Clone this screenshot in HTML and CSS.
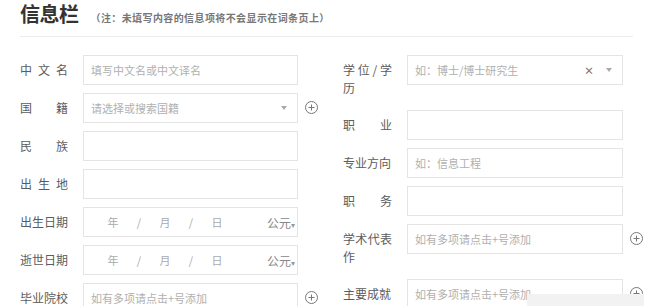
FILE: index.html
```html
<!DOCTYPE html>
<html lang="zh-CN">
<head>
    <meta charset="UTF-8">
    <meta name="viewport" content="width=device-width, initial-scale=1.0">
    <title>信息栏</title>
    <link rel="stylesheet" href="styles.css">
</head>
<body>
    <div class="info-panel">
        <div class="panel-head">
            <h2 class="panel-title">信息栏</h2>
            <span class="panel-note">（注：未填写内容的信息项将不会显示在词条页上）</span>
        </div>

        <div class="form-grid">
            <!-- 左侧一栏 -->
            <div class="form-col left-col">
                <div class="form-row">
                    <label class="row-label spread">中文名</label>
                    <input class="field" type="text" placeholder="填写中文名或中文译名">
                </div>
                <div class="form-row">
                    <label class="row-label spread">国籍</label>
                    <div class="field select-field">
                        <span class="hint">请选择或搜索国籍</span>
                        <span class="caret"></span>
                    </div>
                    <span class="add-btn"><svg viewBox="0 0 13 13" width="13" height="13"><circle cx="6.5" cy="6.5" r="6" fill="none" stroke="#777" stroke-width="1"/><path d="M6.5 3.5v6M3.5 6.5h6" stroke="#777" stroke-width="1"/></svg></span>
                </div>
                <div class="form-row">
                    <label class="row-label spread">民族</label>
                    <input class="field" type="text">
                </div>
                <div class="form-row">
                    <label class="row-label spread">出生地</label>
                    <input class="field" type="text">
                </div>
                <div class="form-row">
                    <label class="row-label">出生日期</label>
                    <div class="field date-field">
                        <span class="date-part">年</span>
                        <span class="date-part">/</span>
                        <span class="date-part">月</span>
                        <span class="date-part">/</span>
                        <span class="date-part">日</span>
                        <span class="era">公元<span class="era-caret">▾</span></span>
                    </div>
                </div>
                <div class="form-row">
                    <label class="row-label">逝世日期</label>
                    <div class="field date-field">
                        <span class="date-part">年</span>
                        <span class="date-part">/</span>
                        <span class="date-part">月</span>
                        <span class="date-part">/</span>
                        <span class="date-part">日</span>
                        <span class="era">公元<span class="era-caret">▾</span></span>
                    </div>
                </div>
                <div class="form-row">
                    <label class="row-label">毕业院校</label>
                    <input class="field" type="text" placeholder="如有多项请点击+号添加">
                    <span class="add-btn"><svg viewBox="0 0 13 13" width="13" height="13"><circle cx="6.5" cy="6.5" r="6" fill="none" stroke="#777" stroke-width="1"/><path d="M6.5 3.5v6M3.5 6.5h6" stroke="#777" stroke-width="1"/></svg></span>
                </div>
            </div>

            <!-- 右侧一栏 -->
            <div class="form-col right-col">
                <div class="form-row">
                    <label class="row-label">学位/学历</label>
                    <div class="field select-field">
                        <span class="hint">如：博士/博士研究生</span>
                        <span class="clear">×</span>
                        <span class="caret"></span>
                    </div>
                </div>
                <div class="form-row">
                    <label class="row-label spread">职业</label>
                    <input class="field" type="text">
                </div>
                <div class="form-row">
                    <label class="row-label">专业方向</label>
                    <input class="field" type="text" placeholder="如：信息工程">
                </div>
                <div class="form-row">
                    <label class="row-label spread">职务</label>
                    <input class="field" type="text">
                </div>
                <div class="form-row">
                    <label class="row-label">学术代表作</label>
                    <input class="field" type="text" placeholder="如有多项请点击+号添加">
                    <span class="add-btn"><svg viewBox="0 0 13 13" width="13" height="13"><circle cx="6.5" cy="6.5" r="6" fill="none" stroke="#777" stroke-width="1"/><path d="M6.5 3.5v6M3.5 6.5h6" stroke="#777" stroke-width="1"/></svg></span>
                </div>
                <div class="form-row">
                    <label class="row-label">主要成就</label>
                    <input class="field" type="text" placeholder="如有多项请点击+号添加">
                    <span class="add-btn"><svg viewBox="0 0 13 13" width="13" height="13"><circle cx="6.5" cy="6.5" r="6" fill="none" stroke="#777" stroke-width="1"/><path d="M6.5 3.5v6M3.5 6.5h6" stroke="#777" stroke-width="1"/></svg></span>
                </div>
            </div>
        </div>

        <!-- 截图右下角的浮层 -->
        <div class="corner-overlay"></div>
    </div>
</body>
</html>
```

FILE: styles.css
```css
body {
    margin: 0;
    background-color: #fff;
    font-family: "Noto Sans CJK SC", "Noto Sans", sans-serif;
    color: #555;
    overflow: hidden;
}

.info-panel {
    position: relative;
    width: 654px;
    height: 306px;
    padding-left: 20px;
    box-sizing: border-box;
}

.panel-head {
    width: 613px;
    display: flex;
    align-items: baseline;
    padding-top: 1px;
    padding-bottom: 9px;
    border-bottom: 1px solid #ececec;
}

.panel-title {
    margin: 0;
    font-size: 20px;
    line-height: 26px;
    font-weight: 700;
    color: #333;
    letter-spacing: -0.5px;
}

.panel-note {
    margin-left: 12px;
    font-size: 10px;
    line-height: 14px;
    color: #777;
    font-weight: 700;
    letter-spacing: 0.4px;
}

.form-grid {
    display: flex;
    margin-top: 18px;
}

.form-col {
    display: flex;
    flex-direction: column;
    gap: 8px;
}

.left-col {
    width: 298px;
}

.right-col {
    margin-left: 25px;
}

.form-row {
    display: flex;
    align-items: flex-start;
}

.row-label {
    width: 48px;
    margin-right: 15px;
    padding: 6px 0 5px;
    font-size: 12px;
    line-height: 18px;
    color: #5c5c5c;
    text-align: justify;
}

.right-col .row-label {
    width: 49px;
}

.row-label.spread {
    text-align-last: justify;
}

.field {
    width: 215px;
    height: 30px;
    box-sizing: border-box;
    border: 1px solid #e4e4e4;
    background: #fff;
    padding: 0 7px;
    font-family: inherit;
    font-size: 11px;
    color: #555;
    outline: none;
    margin: 0;
}

.right-col .field {
    width: 216px;
}

.field::placeholder {
    color: #b0b0b0;
}

.select-field {
    display: flex;
    align-items: center;
}

.hint {
    flex: 1;
    color: #b0b0b0;
    font-size: 11px;
}

.clear {
    font-size: 10px;
    font-weight: 700;
    color: #777;
    margin-right: 12px;
}

.caret {
    width: 0;
    height: 0;
    border-left: 3px solid transparent;
    border-right: 3px solid transparent;
    border-top: 4px solid #aaa;
    margin-right: 3px;
}

.date-field {
    display: flex;
    align-items: center;
    padding-left: 16px;
    padding-right: 2px;
}

.date-part {
    width: 26px;
    text-align: center;
    font-size: 11px;
    color: #aaa;
}

.era {
    margin-left: auto;
    font-size: 12px;
    color: #888;
}

.era-caret {
    font-size: 8px;
    color: #999;
}

.add-btn {
    display: flex;
    margin-left: 7px;
    margin-top: 8px;
}

.corner-overlay {
    position: absolute;
    left: 527px;
    top: 294px;
    width: 117px;
    height: 12px;
    background-color: #f2f2f2;
}
```
